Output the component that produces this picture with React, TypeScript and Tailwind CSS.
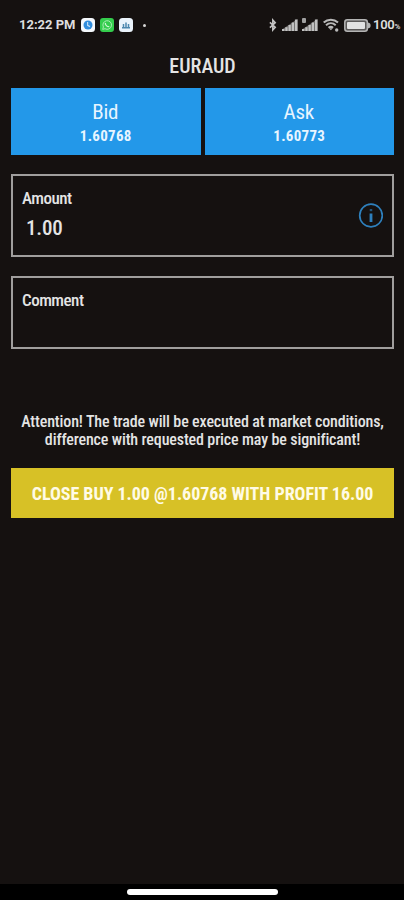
import type { ReactNode } from "react";

type TextProps = {
  children: ReactNode;
  className?: string;
};

// Narrow variant of Roboto
function Text({ children, className = "" }: TextProps) {
  return (
    <span className={`block whitespace-nowrap [font-stretch:75%] ${className}`}>
      {children}
    </span>
  );
}

function SignalIcon() {
  return (
    <svg className="h-[14px] w-4" viewBox="0 0 16 14">
      <path d="M0 13v-1.5L15.5 1v12z" fill="#6d6b6a" />
      <path
        d="M0 11h2.4v2H0zM3.3 9.3h2.3V13H3.3zM6.5 7h2.3v6H6.5zM9.7 4.500H12V13H9.700zM12.900 1.500h2.600V13h-2.600z"
        fill="#c2c2c2"
      />
    </svg>
  );
}

function StatusBar() {
  return (
    <header className="flex h-[50px] items-center pl-[19px] pr-1 text-[#dedede]">
      <span className="w-[62px] whitespace-nowrap text-[13px] font-bold">
        12:22 PM
      </span>
      <div className="flex items-center gap-[5px]">
        <svg className="size-[14px]" viewBox="0 0 14 14">
          <rect width="14" height="14" rx="3.5" fill="#f4f8fc" />
          <circle cx="7" cy="7" r="4.5" fill="#318ddd" />
          <path d="M6.6 4v3.4l2.4 1.2" fill="none" stroke="#b9dcf6" strokeWidth="1.2" />
        </svg>
        <svg className="size-[14px]" viewBox="0 0 14 14">
          <rect width="14" height="14" rx="3" fill="#34cd4d" />
          <path d="m2.7 11.4.7-2.4A4.3 4.3 0 1 1 5 10.7z" fill="none" stroke="#a9edb2" />
          <path d="M5.4 4.8c-.4 2 1.8 4.2 3.9 3.8" fill="none" stroke="#c9f5cf" strokeWidth="1.3" />
        </svg>
        <svg className="size-[14px]" viewBox="0 0 14 14">
          <rect width="14" height="14" rx="3.5" fill="#eaf3fb" />
          <path d="M3 9.7h8M4.5 9V6M7 9V4.5M9.5 9V6" stroke="#4c87ae" strokeWidth="1.5" />
        </svg>
      </div>
      <span className="ml-[10px] size-[3px] rounded-full bg-[#d5d5d5]" />
      <div className="ml-auto flex items-center">
        <svg
          className="mr-[5px] h-[14px] w-[8px]"
          viewBox="0 0 9 14"
          fill="none"
          stroke="#c4c4c4"
          strokeWidth="1.8"
        >
          <path d="m1 4 6 5.5-2.7 3V1.5l2.7 3L1 10" />
        </svg>
        <SignalIcon />
        <span className="relative ml-1">
          <SignalIcon />
          <span className="absolute left-0 top-0 h-[5px] w-1 rounded-[1px] bg-[#a0a0a0]" />
        </span>
        <svg
          className="ml-[5px] h-[14px] w-4"
          viewBox="0 0 16 14"
          fill="none"
          stroke="#b9b9b9"
          strokeWidth="2"
        >
          <path d="M.7 4.5c4-3.7 10.3-3.7 14.3 0M3 7.2c2.9-2.5 6.9-2.5 9.7 0M5.5 9.8c1.5-1.2 3.1-1.2 4.6 0" />
          <path d="m6 10.3 1.9 2 1.9-2z" fill="#b9b9b9" stroke="none" />
          <circle cx="13.7" cy="12" r="1.7" fill="#b9b9b9" stroke="none" />
        </svg>
        <svg className="ml-[5px] h-[13px] w-[27px]" viewBox="0 0 27 13">
          <rect x=".8" y=".8" width="22.5" height="11.4" rx="2.5" fill="#5b5958" stroke="#b4b4b4" strokeWidth="1.5" />
          <rect x="3" y="3" width="18" height="7" rx="1" fill="#e2e2e2" />
          <path d="M24 3.500c2 .5 2.600 1.400 2.600 3s-.6 2.500-2.600 3z" fill="#b4b4b4" />
        </svg>
        <span className="ml-[2px] text-[13px] font-semibold tracking-[-0.3px]">
          100<span className="text-[8px]">%</span>
        </span>
      </div>
    </header>
  );
}

function PriceTile({ label, price }: { label: string; price: string }) {
  return (
    <div className="flex h-[67px] flex-1 flex-col items-center bg-[#2398e9] pt-3 text-[#e8f5ff]">
      <Text className="-ml-px text-[21px] leading-[25px] tracking-[-0.3px]">{label}</Text>
      <Text className="text-[15px] font-bold leading-[22px] tracking-[0.3px]">
        {price}
      </Text>
    </div>
  );
}

export default function App() {
  return (
    <div className="flex h-[900px] w-[404px] flex-col bg-[#151110] font-[Roboto,'Liberation_Sans',sans-serif] text-[#e4e4e4]">
      <StatusBar />
      <main className="flex flex-1 flex-col pl-[11px] pr-[10px]">
        <h1 className="flex h-[38px] justify-center">
          <Text className="text-[20px] leading-8 [font-weight:470]">EURAUD</Text>
        </h1>
        <section className="flex gap-1">
          <PriceTile label="Bid" price="1.60768" />
          <PriceTile label="Ask" price="1.60773" />
        </section>
        <section className="mt-[19px] flex h-[83px] items-center justify-between border-2 border-[#a09e9d] px-[9px]">
          <div className="h-full pt-3">
            <Text className="text-[17px] leading-5 tracking-[-0.5px] [font-weight:480]">
              Amount
            </Text>
            <Text className="ml-1 mt-2 text-[21px] leading-6 tracking-[-0.2px] [font-weight:480]">
              1.00
            </Text>
          </div>
          <svg className="size-[25px]" viewBox="0 0 25 25" fill="none" stroke="#2e80bd">
            <circle cx="13" cy="12.5" r="11.3" strokeWidth="1.7" />
            <path d="M13 10.5V19" strokeWidth="2.8" />
            <path d="M13 6v2.2" strokeWidth="2.5" stroke="#22567d" />
          </svg>
        </section>
        <section className="mt-[19px] h-[73px] border-2 border-[#a09e9d] pl-[9px] pt-3">
          <Text className="text-[17px] leading-5 tracking-[-0.5px] [font-weight:480]">
            Comment
          </Text>
        </section>
        <p className="mt-16 flex flex-col items-center">
          <Text className="text-[16px] leading-[18px] tracking-[-0.14px] [font-weight:480]">
            Attention! The trade will be executed at market conditions,
          </Text>
          <Text className="text-[16px] leading-[18px] tracking-[-0.14px] [font-weight:480]">
            difference with requested price may be significant!
          </Text>
        </p>
        <button className="mt-[19px] flex h-[50px] items-center justify-center bg-[#d7c126] text-[#fffbe6]">
          <Text className="text-[18px] font-bold tracking-[-0.03px]">
            CLOSE BUY 1.00 @1.60768 WITH PROFIT 16.00
          </Text>
        </button>
      </main>
      <footer className="flex h-4 justify-center bg-black pt-[5px]">
        <div className="h-[6px] w-[151px] rounded-full bg-white" />
      </footer>
    </div>
  );
}
